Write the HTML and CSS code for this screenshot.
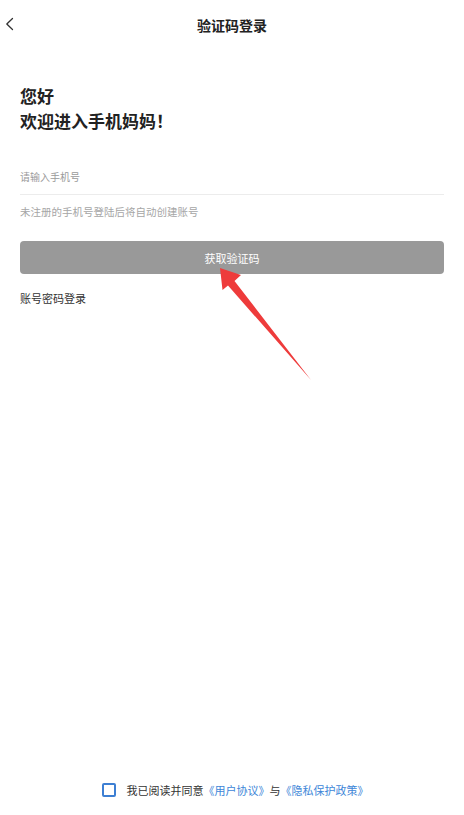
FILE: index.html
```html
<!DOCTYPE html>
<html lang="zh-CN">
<head>
<meta charset="utf-8">
<title>验证码登录</title>
<link rel="stylesheet" href="styles.css">
</head>
<body>
<div class="page">
  <header class="topbar">
    <svg class="back" width="20" height="20" viewBox="0 0 20 20"><path d="M9.5 4.5 L3.8 10 L9.5 15.5" fill="none" stroke="#333" stroke-width="1.3" stroke-linecap="round" stroke-linejoin="round"/></svg>
    <div class="title">验证码登录</div>
  </header>
  <main class="content">
    <div class="greeting">
      <div>您好</div>
      <div>欢迎进入手机妈妈！</div>
    </div>
    <div class="field"><span class="placeholder">请输入手机号</span></div>
    <div class="hint">未注册的手机号登陆后将自动创建账号</div>
    <button class="btn">获取验证码</button>
    <div class="alt">账号密码登录</div>
  </main>
  <footer class="agree">
    <span class="checkbox"></span>
    <span class="agree-text">我已阅读并同意<span class="link">《用户协议》</span>与<span class="link">《隐私保护政策》</span></span>
  </footer>
  <svg class="pointer" width="464" height="815" viewBox="0 0 464 815"><polygon points="220,268 241,275 234.5,281 311,380 228,285.5 222.5,290" fill="#ee3b3b"/></svg>
</div>
</body>
</html>
```
FILE: styles.css
```css
* { box-sizing: border-box; margin: 0; padding: 0; }
html, body { width: 464px; height: 815px; background: #fff; }
body { font-family: "Noto Sans CJK SC", "Noto Sans", sans-serif; color: #333; overflow: hidden; }
.page { position: relative; width: 464px; height: 815px; display: flex; flex-direction: column; }
.topbar { height: 50px; display: flex; align-items: center; justify-content: center; position: relative; }
.back { position: absolute; left: 3px; top: 14px; }
.title { font-size: 14px; font-weight: 700; color: #222; line-height: 20px; }
.content { padding: 0 20px; display: flex; flex-direction: column; }
.greeting { margin-top: 33px; font-size: 17px; font-weight: 700; line-height: 25px; color: #222; }
.field { margin-top: 27px; height: 35px; display: flex; align-items: center; border-bottom: 1px solid #ececec; padding-bottom: 1px; }
.placeholder { font-size: 10px; color: #9a9a9a; line-height: 16px; }
.hint { margin-top: 9px; font-size: 10.5px; color: #a6a6a6; line-height: 16px; }
.btn { margin-top: 21px; height: 33px; border: none; border-radius: 4px; background: #999; color: #fff; font-family: inherit; font-size: 11px; display: flex; align-items: center; justify-content: center; }
.alt { margin-top: 16px; font-size: 11px; line-height: 16px; color: #333; }
.agree { margin-top: auto; height: 50px; display: flex; align-items: center; justify-content: center; gap: 11px; padding-left: 6px; }
.checkbox { width: 14px; height: 14px; border: 2px solid #3d7fd3; border-radius: 2px; }
.agree-text { font-size: 11px; line-height: 16px; color: #333; }
.link { color: #3d86d8; }
.pointer { position: absolute; left: 0; top: 0; pointer-events: none; }
```
